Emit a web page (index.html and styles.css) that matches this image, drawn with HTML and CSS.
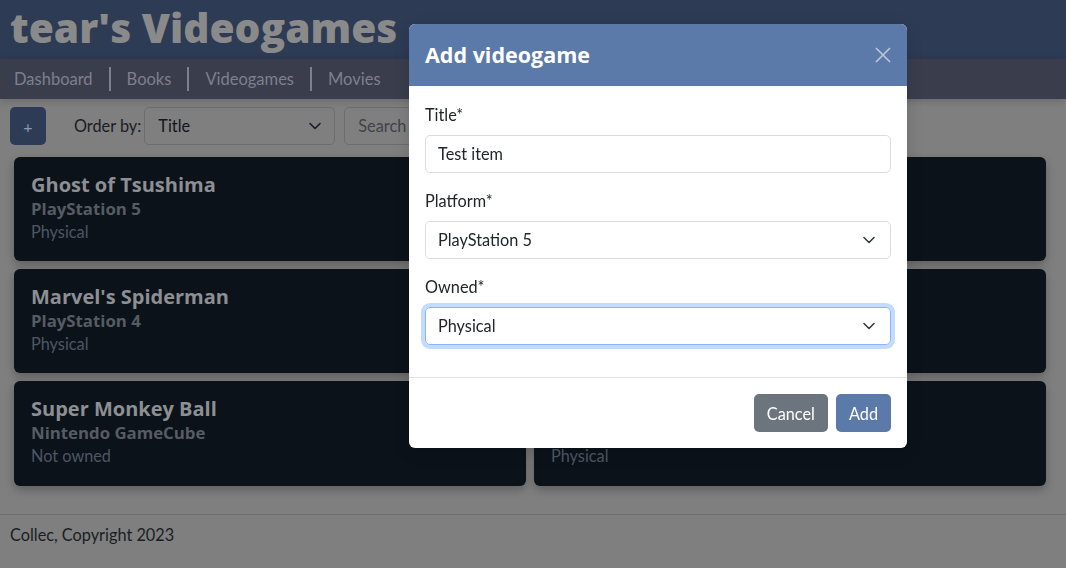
FILE: index.html
```html
<!DOCTYPE html>
<html lang="en">
<head>
<meta charset="utf-8">
<title>tear's Videogames</title>
<link rel="stylesheet" href="styles.css">
</head>
<body>
<div class="page">
  <header class="site-header">
    <h1 class="site-title">tear's Videogames</h1>
  </header>
  <nav class="site-nav">
    <a class="nav-link">Dashboard</a>
    <span class="nav-sep"></span>
    <a class="nav-link">Books</a>
    <span class="nav-sep"></span>
    <a class="nav-link">Videogames</a>
    <span class="nav-sep"></span>
    <a class="nav-link">Movies</a>
  </nav>
  <main class="content">
    <div class="toolbar">
      <button class="btn-plus">+</button>
      <label class="order-label">Order by:</label>
      <div class="page-select">
        <span>Title</span>
        <svg class="chev" width="12" height="8" viewBox="0 0 12 8"><path d="M1 1.5l5 5 5-5" fill="none" stroke="#1a1d21" stroke-width="1.6" stroke-linecap="round" stroke-linejoin="round"/></svg>
      </div>
      <div class="page-search">Search</div>
    </div>
    <div class="cards">
      <div class="card"><div class="card-title">Ghost of Tsushima</div><div class="card-platform">PlayStation 5</div><div class="card-owned">Physical</div></div>
      <div class="card"><div class="card-title">God of War Ragnarök</div><div class="card-platform">PlayStation 5</div><div class="card-owned">Physical</div></div>
      <div class="card"><div class="card-title">Marvel's Spiderman</div><div class="card-platform">PlayStation 4</div><div class="card-owned">Physical</div></div>
      <div class="card"><div class="card-title">Persona 5 Royal</div><div class="card-platform">PlayStation 4</div><div class="card-owned">Physical</div></div>
      <div class="card"><div class="card-title">Super Monkey Ball</div><div class="card-platform">Nintendo GameCube</div><div class="card-owned">Not owned</div></div>
      <div class="card"><div class="card-title">Zelda</div><div class="card-platform">Switch</div><div class="card-owned">Physical</div></div>
    </div>
  </main>
  <footer class="site-footer">Collec, Copyright 2023</footer>
</div>

<div class="modal">
  <div class="modal-header">
    <h5 class="modal-title">Add videogame</h5>
    <button class="btn-close" aria-label="Close">
      <svg width="16" height="16" viewBox="0 0 16 16"><path d="M1 1l14 14M15 1L1 15" stroke="#bac5d9" stroke-width="1.7" fill="none"/></svg>
    </button>
  </div>
  <div class="modal-body">
    <div class="field">
      <label class="form-label">Title*</label>
      <div class="form-control">Test item</div>
    </div>
    <div class="field">
      <label class="form-label">Platform*</label>
      <div class="form-control form-select">
        <span>PlayStation 5</span>
        <svg class="chev" width="12" height="8" viewBox="0 0 12 8"><path d="M1 1.5l5 5 5-5" fill="none" stroke="#343a40" stroke-width="1.6" stroke-linecap="round" stroke-linejoin="round"/></svg>
      </div>
    </div>
    <div class="field">
      <label class="form-label">Owned*</label>
      <div class="form-control form-select focused">
        <span>Physical</span>
        <svg class="chev" width="12" height="8" viewBox="0 0 12 8"><path d="M1 1.5l5 5 5-5" fill="none" stroke="#343a40" stroke-width="1.6" stroke-linecap="round" stroke-linejoin="round"/></svg>
      </div>
    </div>
  </div>
  <div class="modal-footer">
    <button class="btn btn-secondary">Cancel</button>
    <button class="btn btn-primary">Add</button>
  </div>
</div>
</body>
</html>
```

FILE: styles.css
```css
* { box-sizing: border-box; }

html, body {
  margin: 0;
  padding: 0;
  height: 100%;
}

body {
  font-family: "Lato", "Noto Sans", sans-serif;
  font-size: 16.3px;
  line-height: 1.5;
  color: #1a1d22;
  background: #7f7f7f;
  overflow: hidden;
}

.page {
  display: flex;
  flex-direction: column;
  min-height: 100%;
}

.site-header {
  background: #2d3b55;
  height: 59px;
  padding: 0 10px;
  display: flex;
  align-items: center;
}

.site-title {
  margin: -5px 0 0 0;
  font-family: "Open Sans", "DejaVu Sans", sans-serif;
  font-weight: 800;
  font-size: 40.7px;
  line-height: 1;
  color: #8a8a8a;
}

.site-nav {
  background: #3a3d4c;
  height: 40px;
  display: flex;
  align-items: center;
  padding-left: 14px;
  box-shadow: 0 2px 8px rgba(0,0,0,0.18);
  position: relative;
}

.nav-link {
  color: #7d808e;
  font-size: 16.5px;
}

.nav-sep {
  width: 2px;
  height: 24px;
  background: #7d808e;
  margin: 0 16px 0 16px;
}

.content {
  padding: 8px 10px 0 10px;
}

.toolbar {
  display: flex;
  align-items: center;
  height: 38px;
}

.btn-plus {
  width: 36px;
  height: 38px;
  border: none;
  border-radius: 5px;
  background: #2e3b56;
  color: #8d98ac;
  font-family: "Lato", sans-serif;
  font-size: 16px;
  padding: 0;
}

.order-label {
  margin-left: 28px;
  margin-right: 3px;
  color: #1a1d22;
}

.page-select {
  width: 191px;
  height: 38px;
  border: 1px solid #6d6d6d;
  border-radius: 5px;
  display: flex;
  align-items: center;
  justify-content: space-between;
  padding: 0 13px 0 13px;
  color: #131518;
}

.page-search {
  margin-left: 9px;
  width: 320px;
  height: 38px;
  border: 1px solid #6d6d6d;
  border-radius: 5px;
  padding: 0 13px;
  display: flex;
  align-items: center;
  color: #3f4348;
}

.cards {
  display: grid;
  grid-template-columns: 1fr 1fr;
  gap: 8px;
  margin: 12px 10px 0 4px;
}

.card {
  background: #0c121a;
  border-radius: 6px;
  height: 104px;
  padding: 16px 17px;
  box-shadow: 0 4px 10px rgba(0,0,0,0.25);
}

.card:nth-child(5), .card:nth-child(6) { height: 105px; }

.card-title {
  font-family: "Open Sans", "DejaVu Sans", sans-serif;
  font-weight: 700;
  font-size: 20px;
  line-height: 24px;
  color: #8d8f92;
}

.card-platform {
  font-family: "Open Sans", "DejaVu Sans", sans-serif;
  font-weight: 700;
  font-size: 16.8px;
  line-height: 24px;
  color: #575c63;
}

.card-owned {
  line-height: 22px;
  color: #4d5764;
}

.site-footer {
  margin-top: 28px;
  border-top: 1px solid #6e6e6e;
  padding: 8px 10px;
  color: #1a1e24;
}

/* Modal */
.modal {
  position: fixed;
  top: 24px;
  left: 409px;
  width: 498px;
  background: #fff;
  border-radius: 6px;
  overflow: hidden;
  box-shadow: 0 4px 16px rgba(0,0,0,0.15);
}

.modal-header {
  background: #5b7aa9;
  height: 62px;
  padding: 16px;
  display: flex;
  align-items: center;
  justify-content: space-between;
}

.modal-title {
  margin: 0;
  font-family: "Open Sans", "DejaVu Sans", sans-serif;
  font-weight: 700;
  font-size: 21.5px;
  line-height: 30px;
  color: #fff;
}

.btn-close {
  background: none;
  border: none;
  padding: 0;
  width: 16px;
  height: 16px;
  display: flex;
}

.modal-body {
  padding: 17px 16px 16px 16px;
}

.field {
  margin-bottom: 16px;
}

.form-label {
  display: block;
  margin-bottom: 8px;
  color: #212529;
  line-height: 24px;
}

.form-control {
  height: 38px;
  border: 1px solid #d9dce1;
  border-radius: 5px;
  padding: 0 12px;
  display: flex;
  align-items: center;
  color: #212529;
}

.form-select {
  justify-content: space-between;
  padding-right: 15px;
}

.form-select.focused {
  border-color: #86b7fe;
  box-shadow: 0 0 0 4px rgba(13,110,253,0.25);
}

.modal-footer {
  border-top: 1px solid #dee2e6;
  padding: 12px;
  display: flex;
  justify-content: flex-end;
}

.btn {
  height: 38px;
  border: none;
  border-radius: 5px;
  color: #fff;
  font-family: "Lato", sans-serif;
  font-size: 16.3px;
  padding: 0 13px;
  margin: 4px;
}

.btn-secondary { background: #6c757d; }
.btn-primary { background: #5b7aa9; }
```
